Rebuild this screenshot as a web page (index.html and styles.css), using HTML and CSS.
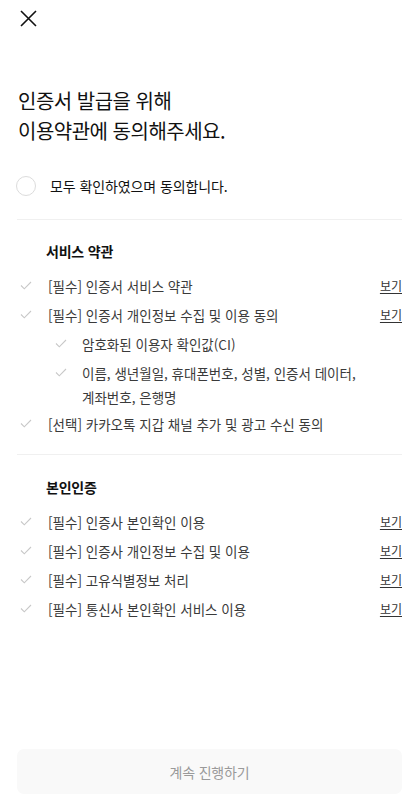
FILE: index.html
```html
<!DOCTYPE html>
<html lang="ko">
<head>
<meta charset="utf-8">
<meta name="viewport" content="width=device-width, initial-scale=1">
<title>이용약관 동의</title>
<link rel="stylesheet" href="styles.css">
</head>
<body>
<div class="page">
  <header class="top">
    <button class="close" aria-label="닫기">
      <svg width="17" height="17" viewBox="0 0 17 17"><path d="M1 1L16 16M16 1L1 16" stroke="#111" stroke-width="1.6" fill="none"/></svg>
    </button>
  </header>

  <h1 class="title">인증서 발급을 위해<br>이용약관에 동의해주세요.</h1>

  <label class="all">
    <span class="circle"></span>
    <span class="all-text">모두 확인하였으며 동의합니다.</span>
  </label>

  <section class="sec">
    <h2 class="sec-title">서비스 약관</h2>
    <ul class="list">
      <li class="row"><span class="chk"><svg width="12" height="9" viewBox="0 0 12 9"><path d="M1 4.5L4.3 7.8L11 1" stroke="#c8c8c8" stroke-width="1.1" fill="none"/></svg></span><span class="txt">[필수] 인증서 서비스 약관</span><a class="view">보기</a></li>
      <li class="row"><span class="chk"><svg width="12" height="9" viewBox="0 0 12 9"><path d="M1 4.5L4.3 7.8L11 1" stroke="#c8c8c8" stroke-width="1.1" fill="none"/></svg></span><span class="txt">[필수] 인증서 개인정보 수집 및 이용 동의</span><a class="view">보기</a></li>
      <li class="row sub"><span class="chk"><svg width="12" height="9" viewBox="0 0 12 9"><path d="M1 4.5L4.3 7.8L11 1" stroke="#c8c8c8" stroke-width="1.1" fill="none"/></svg></span><span class="txt">암호화된 이용자 확인값(CI)</span></li>
      <li class="row sub multi"><span class="chk"><svg width="12" height="9" viewBox="0 0 12 9"><path d="M1 4.5L4.3 7.8L11 1" stroke="#c8c8c8" stroke-width="1.1" fill="none"/></svg></span><span class="txt">이름, 생년월일, 휴대폰번호, 성별, 인증서 데이터,<br>계좌번호, 은행명</span></li>
      <li class="row"><span class="chk"><svg width="12" height="9" viewBox="0 0 12 9"><path d="M1 4.5L4.3 7.8L11 1" stroke="#c8c8c8" stroke-width="1.1" fill="none"/></svg></span><span class="txt">[선택] 카카오톡 지갑 채널 추가 및 광고 수신 동의</span></li>
    </ul>
  </section>

  <section class="sec">
    <h2 class="sec-title">본인인증</h2>
    <ul class="list">
      <li class="row"><span class="chk"><svg width="12" height="9" viewBox="0 0 12 9"><path d="M1 4.5L4.3 7.8L11 1" stroke="#c8c8c8" stroke-width="1.1" fill="none"/></svg></span><span class="txt">[필수] 인증사 본인확인 이용</span><a class="view">보기</a></li>
      <li class="row"><span class="chk"><svg width="12" height="9" viewBox="0 0 12 9"><path d="M1 4.5L4.3 7.8L11 1" stroke="#c8c8c8" stroke-width="1.1" fill="none"/></svg></span><span class="txt">[필수] 인증사 개인정보 수집 및 이용</span><a class="view">보기</a></li>
      <li class="row"><span class="chk"><svg width="12" height="9" viewBox="0 0 12 9"><path d="M1 4.5L4.3 7.8L11 1" stroke="#c8c8c8" stroke-width="1.1" fill="none"/></svg></span><span class="txt">[필수] 고유식별정보 처리</span><a class="view">보기</a></li>
      <li class="row"><span class="chk"><svg width="12" height="9" viewBox="0 0 12 9"><path d="M1 4.5L4.3 7.8L11 1" stroke="#c8c8c8" stroke-width="1.1" fill="none"/></svg></span><span class="txt">[필수] 통신사 본인확인 서비스 이용</span><a class="view">보기</a></li>
    </ul>
  </section>

  <div class="bottom">
    <button class="cta" disabled>계속 진행하기</button>
  </div>
</div>
</body>
</html>
```

FILE: styles.css
```css
* { box-sizing: border-box; }
html, body { margin: 0; padding: 0; background: #fff; }
body {
  font-family: "Noto Sans CJK KR", "Noto Sans", sans-serif;
  color: #111;
}
.page {
  min-height: 100vh;
  display: flex;
  flex-direction: column;
  padding: 0 17px 6px;
}
.top { height: 36px; display: flex; align-items: center; }
.close {
  border: 0; background: none; padding: 0; margin-left: 3px;
  width: 17px; height: 17px; display: flex;
}
.title {
  margin: 50px 0 0 1px;
  font-size: 20px;
  line-height: 30px;
  font-weight: 400;
  letter-spacing: -0.5px;
  color: #111;
}
.all {
  margin-top: 28px;
  display: flex;
  align-items: center;
  height: 24px;
}
.circle {
  width: 20px; height: 20px;
  border: 1.5px solid #dcdcdc;
  border-radius: 50%;
  margin-left: -1px;
}
.all-text {
  margin-left: 14px;
  font-size: 14px;
  letter-spacing: -0.1px;
  color: #111;
}
.sec {
  border-top: 1px solid #f0f0f0;
  margin-top: 21px;
  padding-top: 21px;
}
.sec + .sec { margin-top: 16px; padding-top: 22px; }
.sec-title {
  margin: 0 0 10px 29px;
  font-size: 14px;
  line-height: 20px;
  font-weight: 700;
  letter-spacing: -0.2px;
  color: #111;
}
.list { list-style: none; margin: 0; padding: 0; }
.row {
  display: flex;
  align-items: flex-start;
  padding: 2.5px 0;
  font-size: 13.5px;
  line-height: 24px;
  color: #3a3a3a;
}
.row.multi { padding-bottom: 0.5px; }
.chk {
  width: 31px;
  height: 24px;
  flex: none;
  display: flex;
  align-items: center;
  padding-left: 3px;
}
.row.sub .chk { width: 65px; padding-left: 38px; }
.txt { flex: 1; }
.view {
  font-size: 12px;
  color: #333;
  text-decoration: underline;
  text-underline-offset: 2px;
}
.bottom { margin-top: auto; }
.cta {
  width: 100%;
  height: 45px;
  border: 0;
  border-radius: 7px;
  background: #f9f9f9;
  color: #9a9a9a;
  font-family: inherit;
  font-size: 14px;
  letter-spacing: -0.2px;
}
```
